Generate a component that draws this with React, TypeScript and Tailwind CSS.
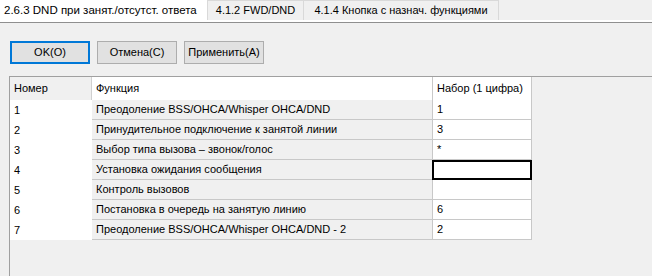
const rows = [
  { num: "1", func: "Преодоление BSS/OHCA/Whisper OHCA/DND", code: "1" },
  { num: "2", func: "Принудительное подключение к занятой линии", code: "3" },
  { num: "3", func: "Выбор типа вызова – звонок/голос", code: "*" },
  { num: "4", func: "Установка ожидания сообщения", code: "" },
  { num: "5", func: "Контроль вызовов", code: "" },
  { num: "6", func: "Постановка в очередь на занятую линию", code: "6" },
  { num: "7", func: "Преодоление BSS/OHCA/Whisper OHCA/DND - 2", code: "2" },
];

export default function App() {
  return (
    <div
      className="w-[652px] h-[276px] bg-[#f0f0f0] overflow-hidden flex flex-col text-[11px] text-black"
      style={{ fontFamily: '"Liberation Sans", Arial, sans-serif' }}
    >
      {/* tabs */}
      <div className="flex h-[20px] shrink-0">
        <div className="w-[207px] h-[22px] bg-white pl-[4px] flex items-center text-[11.5px]">
          2.6.3 DND при занят./отсутст. ответа
        </div>
        <div className="w-[97px] h-[20px] border border-b-0 border-[#d9d9d9] flex items-center justify-center">
          4.1.2 FWD/DND
        </div>
        <div className="w-[195px] h-[20px] border border-b-0 border-l-0 border-[#d9d9d9] flex items-center justify-center">
          4.1.4 Кнопка с назнач. функциями
        </div>
      </div>
      <div className="h-[2px] bg-white shrink-0" />
      <div className="h-[1px] bg-[#8f8f8f] shrink-0" />

      {/* buttons */}
      <div className="flex gap-[7px] ml-[10px] mt-[18px] shrink-0">
        <button className="w-[80px] h-[23px] bg-[#e1e1e1] border-2 border-[#0078d7]">OK(O)</button>
        <button className="w-[80px] h-[23px] bg-[#e1e1e1] border border-[#adadad]">Отмена(C)</button>
        <button className="w-[80px] h-[23px] bg-[#e1e1e1] border border-[#adadad]">Применить(A)</button>
      </div>

      {/* grid */}
      <div className="ml-[9px] mt-[12px] flex-1 border-l border-t border-[#a0a0a0]">
        <div className="flex h-[23px]">
          <div className="w-[82px] pl-[4px] flex items-center border-r border-[#d0d0d0]">Номер</div>
          <div className="w-[340px] bg-white pl-[4px] flex items-center">Функция</div>
          <div className="w-[100px] bg-white pl-[4px] flex items-center border-l border-r border-[#c8c8c8]">
            Набор (1 цифра)
          </div>
        </div>
        {rows.map((r) => (
          <div key={r.num} className="flex h-[20px]">
            <div className="w-[82px] bg-white pl-[4px] flex items-center">{r.num}</div>
            <div className="w-[340px] pl-[4px] flex items-center border-b border-[#c8c8c8]">{r.func}</div>
            {r.num === "4" ? (
              <div className="w-[100px] bg-white border-2 border-black" />
            ) : (
              <div className="w-[100px] bg-white pl-[4px] flex items-center border-l border-r border-b border-[#c8c8c8]">
                {r.code}
              </div>
            )}
          </div>
        ))}
      </div>
    </div>
  );
}
